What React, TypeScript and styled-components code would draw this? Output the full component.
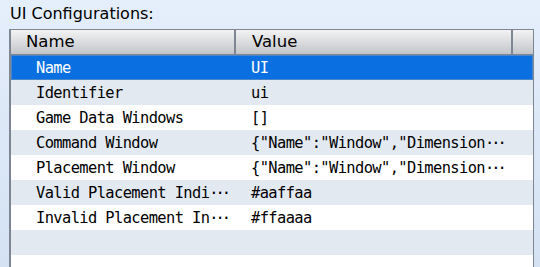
import styled, { createGlobalStyle } from 'styled-components'

type Row = {
  name: string
  value: string
}

const rows: Row[] = [
  { name: 'Name', value: 'UI' },
  { name: 'Identifier', value: 'ui' },
  { name: 'Game Data Windows', value: '[]' },
  { name: 'Command Window', value: '{"Name":"Window","Dimensions":[0,0,240,180]}' },
  { name: 'Placement Window', value: '{"Name":"Window","Dimensions":[0,0,240,120]}' },
  { name: 'Valid Placement Indicator Color', value: '#aaffaa' },
  { name: 'Invalid Placement Indicator Color', value: '#ffaaaa' },
]

// how many characters fit in each column before the dots
const NAME_CHARS = 20
const VALUE_CHARS = 27

const GlobalStyle = createGlobalStyle`
  html, body {
    margin: 0;
    padding: 0;
    height: 100%;
    overflow: hidden;
  }
  body {
    background: linear-gradient(#e5eefb, #d4e2f3);
  }
`

const Clip = ({ text, max }: { text: string; max: number }) =>
  text.length > max ? (
    <>
      {text.slice(0, max)}
      <Dots>···</Dots>
    </>
  ) : (
    <>{text}</>
  )

export default function App() {
  return (
    <Page>
      <GlobalStyle />
      <Title>UI Configurations:</Title>
      <Grid>
        <Header>
          <HeadCell $width={225}>Name</HeadCell>
          <HeadCell $width={277} $first={false}>Value</HeadCell>
          <HeadFill />
        </Header>
        {rows.map((r, i) => (
          <DataRow key={r.name} $alt={i % 2 === 1} $selected={i === 0}>
            <NameCell><Clip text={r.name} max={NAME_CHARS} /></NameCell>
            <ValueCell><Clip text={r.value} max={VALUE_CHARS} /></ValueCell>
          </DataRow>
        ))}
        <DataRow $alt />
        <DataRow />
      </Grid>
    </Page>
  )
}

const Page = styled.div`
  display: flex;
  flex-direction: column;
  height: 267px;
  padding: 0 6px 0 9px;
`

const Title = styled.div`
  height: 29px;
  box-sizing: border-box;
  padding: 4px 0 0 1px;
  font-family: "DejaVu Sans", sans-serif;
  font-size: 16px;
  color: #000;
`

const Grid = styled.div`
  flex: 1;
  border-top: 1px solid #7d8692;
  border-left: 2px solid #7d8692;
  border-right: 1px solid #7d8692;
  background: #fff;
  overflow: hidden;
`

const Header = styled.div`
  display: flex;
  height: 24px;
  border-bottom: 1px solid #7d8692;
  background: linear-gradient(#f3f3f4, #c3c5c9);
`

const HeadCell = styled.div<{ $width: number; $first?: boolean }>`
  width: ${p => p.$width}px;
  flex: none;
  padding-left: ${p => (p.$first === false ? 16 : 15)}px;
  box-sizing: border-box;
  border-right: 2px solid #7d8692;
  font-family: "DejaVu Sans", sans-serif;
  font-size: 16.5px;
  line-height: 24px;
  color: #000;
`

const HeadFill = styled.div`
  flex: 1;
`

const DataRow = styled.div<{ $alt?: boolean; $selected?: boolean }>`
  display: flex;
  height: 25px;
  align-items: center;
  font-family: "DejaVu Sans Mono", monospace;
  font-size: 15.4px;
  letter-spacing: -0.6px;
  white-space: nowrap;
  color: ${p => (p.$selected ? '#fff' : '#000')};
  background: ${p => (p.$selected ? '#0a6fe0' : p.$alt ? '#e3e9f1' : '#fff')};
  box-shadow: ${p => (p.$selected ? 'inset 0 0 0 1px #4a86c8' : 'none')};
`

const NameCell = styled.div`
  width: 225px;
  flex: none;
  box-sizing: border-box;
  padding-left: 25px;
  overflow: hidden;
`

const ValueCell = styled.div`
  flex: 1;
  padding-left: 15px;
  overflow: hidden;
`

const Dots = styled.span`
  letter-spacing: -3px;
`
